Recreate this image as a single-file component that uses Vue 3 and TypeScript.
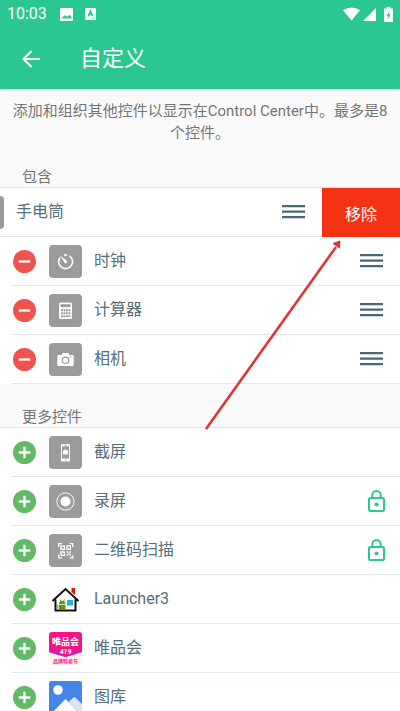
<script setup lang="ts">
import { ref } from 'vue'

type IconName =
  | 'torch' | 'timer' | 'calculator' | 'camera' | 'screenshot'
  | 'record' | 'qr' | 'launcher' | 'vip' | 'gallery'

interface Control {
  name: string
  icon: IconName
  locked?: boolean
}

const included = ref<Control[]>([
  { name: '手电筒', icon: 'torch' },
  { name: '时钟', icon: 'timer' },
  { name: '计算器', icon: 'calculator' },
  { name: '相机', icon: 'camera' },
])

const more = ref<Control[]>([
  { name: '截屏', icon: 'screenshot' },
  { name: '录屏', icon: 'record', locked: true },
  { name: '二维码扫描', icon: 'qr', locked: true },
  { name: 'Launcher3', icon: 'launcher' },
  { name: '唯品会', icon: 'vip' },
  { name: '图库', icon: 'gallery' },
])

// Name of the row that is swiped open to show its remove action
const swiped = ref<string | null>('手电筒')

function remove(item: Control) {
  included.value = included.value.filter((c) => c !== item)
  more.value.unshift(item)
  swiped.value = null
}

function add(item: Control) {
  if (item.locked || included.value.length >= 8) return
  more.value = more.value.filter((c) => c !== item)
  included.value.push(item)
}
</script>

<template>
  <div class="screen">
    <header class="top">
      <div class="status">
        <span class="time">10:03</span>
        <svg class="s-image" viewBox="0 0 13 13" aria-hidden="true">
          <path fill="#fff" fill-rule="evenodd" d="M1 0h11q1 0 1 1v11q0 1-1 1H1q-1 0-1-1V1q0-1 1-1zM2 10.500h9.300V8.500L9.300 6.700 7.400 8.800 5 7.200 2 9.500z" />
        </svg>
        <svg class="s-app" viewBox="0 0 11 12" aria-hidden="true">
          <rect width="11" height="12" rx="1" fill="#fff" />
          <path d="M3.200 8.300 5.400 2.800 7.600 8.300M4 6.600h2.900" fill="none" stroke="#2bc793" stroke-width="1.500" />
          <path d="M6.500 10.300h3.300" stroke="#2bc793" stroke-width=".6" />
        </svg>
        <span class="grow"></span>
        <svg class="s-wifi" viewBox="0 0 18 14" aria-hidden="true">
          <path d="M0 3Q9-3 18 3L9 14z" fill="#fff" />
        </svg>
        <svg class="s-cell" viewBox="0 0 13 13" aria-hidden="true">
          <path d="M13 0v13H0z" fill="#fff" />
        </svg>
        <svg class="s-battery" viewBox="0 0 9 15" aria-hidden="true">
          <path d="M2.500 0h4v1.500H9V15H0V1.500h2.500z" fill="#fff" />
          <path d="M5.500 4 2.500 8.800h1.800L3.500 12.500 6.800 7.500H5z" fill="#2bc793" />
        </svg>
      </div>
      <div class="bar">
        <button class="back" type="button" aria-label="返回">
          <svg viewBox="0 0 18 18" aria-hidden="true">
            <path d="M18 9H1.500M9.500 1 1.500 9l8 8" fill="none" stroke="#fff" stroke-width="2" />
          </svg>
        </button>
        <h1>自定义</h1>
      </div>
    </header>

    <main class="content">
      <p class="intro">添加和组织其他控件以显示在Control Center中。最多是8个控件。</p>

      <template v-for="section in [
        { id: 'in', title: '包含', items: included },
        { id: 'more', title: '更多控件', items: more },
      ]" :key="section.id">
        <h2>{{ section.title }}</h2>
        <ul class="list">
          <li
            v-for="item in section.items"
            :key="item.name"
            class="row"
            :class="{ swiped: section.id === 'in' && swiped === item.name }"
          >
            <div class="body">
              <button
                v-if="section.id === 'in'"
                class="toggle"
                type="button"
                :aria-label="'移除' + item.name"
                @click="swiped = item.name"
              >
                <svg viewBox="0 0 22 22" aria-hidden="true">
                  <circle cx="11" cy="11" r="11" fill="#ef5350" />
                  <path d="M5.500 11h11" stroke="#fff" stroke-width="2.200" />
                </svg>
              </button>
              <button v-else class="toggle" type="button" :aria-label="'添加' + item.name" @click="add(item)">
                <svg viewBox="0 0 22 22" aria-hidden="true">
                  <circle cx="11" cy="11" r="11" fill="#62b966" />
                  <path d="M5.500 11h11M11 5.500v11" stroke="#fff" stroke-width="2.200" />
                </svg>
              </button>

              <svg class="icon" viewBox="0 0 33 33" aria-hidden="true">
                <rect v-if="!['launcher', 'vip', 'gallery'].includes(item.icon)" width="33" height="33" rx="4" fill="#9b9b9b" />
                <g v-if="item.icon === 'torch'" fill="#fff">
                  <path d="M12 8h9v3l-2 3v11h-5V14l-2-3z" />
                </g>
                <g v-else-if="item.icon === 'timer'" fill="none" stroke="#fff" stroke-width="1.600">
                  <path d="M20.500 10.800a7 7 0 1 1-9.600 1.800" />
                  <path d="M10.800 10.500 17.900 15.800 16 18z" fill="#fff" stroke="none" />
                  <circle cx="16.500" cy="10" r="1.300" fill="#fff" stroke="none" />
                  <circle cx="16.700" cy="16.900" r="1.400" fill="#fff" stroke="none" />
                </g>
                <g v-else-if="item.icon === 'calculator'">
                  <rect x="10" y="8.500" width="13" height="16.500" rx="1.500" fill="#fff" />
                  <rect x="11.500" y="10.300" width="10" height="2.800" fill="#9b9b9b" />
                  <path d="M12 16.200h9.500M12 19.200h9.500M12 22.200h9.500" stroke="#9b9b9b" stroke-width="1.900" stroke-dasharray="1.900 .6" />
                </g>
                <g v-else-if="item.icon === 'camera'">
                  <path d="M9.500 12h3l1.200-2h5.600l1.200 2h3q1.200 0 1.200 1.200v8.600q0 1.200-1.200 1.200h-14q-1.200 0-1.200-1.200v-8.600q0-1.200 1.200-1.200z" fill="#fff" />
                  <circle cx="16.500" cy="17.300" r="3.200" fill="none" stroke="#9b9b9b" stroke-width="1.200" />
                  <path d="M20.500 14h2.200" stroke="#9b9b9b" />
                </g>
                <g v-else-if="item.icon === 'screenshot'">
                  <rect x="12" y="8" width="9" height="17.500" rx="1.300" fill="#fff" />
                  <rect x="13" y="10.300" width="7" height="12.200" fill="#9b9b9b" />
                  <path d="M14 14.500h1l.6-1h1.800l.6 1h1v4h-5z" fill="#fff" />
                  <path d="M15 9.200h3" stroke="#9b9b9b" stroke-width=".7" />
                  <circle cx="16.500" cy="24" r=".7" fill="#9b9b9b" />
                </g>
                <g v-else-if="item.icon === 'record'">
                  <circle cx="16.500" cy="16.500" r="8.600" fill="none" stroke="#fff" stroke-width="1" />
                  <circle cx="16.500" cy="16.500" r="5" fill="#fff" />
                </g>
                <g v-else-if="item.icon === 'qr'" fill="none" stroke="#fff" stroke-width="1.300">
                  <path d="M9.700 13V9.700H13M20.500 9.700h3.300V13M9.700 20.500v3.300H13M23.800 21.500v2.300h-3.300" />
                  <rect x="12" y="12" width="3.400" height="3.400" />
                  <rect x="18" y="12" width="3.400" height="3.400" />
                  <rect x="12" y="18" width="3.400" height="3.400" />
                  <path d="M17.500 18h1.500M20.500 18h1.500M19 19.500h1.500M17.500 21h1.500M20.500 21h1.500" />
                </g>
                <g v-else-if="item.icon === 'launcher'">
                  <path d="M22.500 5h3.500v7l-3.500-3z" fill="#e01010" />
                  <path d="M6 17 16.500 7 27 17v11H6z" fill="#fff" />
                  <path d="M3.500 18 16.500 6 29.500 18M6.500 16.500v11h20v-11" fill="none" stroke="#111" stroke-width="2" />
                  <path d="M10 27v-5h6.500v5zM10 21.200q0-3.400 3.200-3.400t3.300 3.400z" fill="#5f9312" />
                  <path d="M8.800 21.500v4M11 16.500l1 2M15.500 16.500l-1 2" stroke="#5f9312" stroke-width="1" />
                  <rect x="18" y="17" width="6" height="5.500" fill="#2aaeea" />
                </g>
                <g v-else-if="item.icon === 'vip'">
                  <rect width="33" height="33" rx="3" fill="#fff4ee" />
                  <path d="M3 0h27q3 0 3 3v17q-8 1-16.500 5Q8 21 0 20V3q0-3 3-3z" fill="#f71486" />
                  <path d="M0 16q5 3 11 3l5.500 6Q8 23 0 20zM33 16q-5 3-11 3l-5.500 6Q25 23 33 20z" fill="#d619b5" />
                  <text class="vip-name" x="16.500" y="13">唯品会</text>
                  <text class="vip-num" x="16.500" y="22">419</text>
                  <text class="vip-tag" x="16.500" y="30.500">品牌特卖节</text>
                </g>
                <g v-else>
                  <rect width="33" height="36" rx="2.500" fill="#4486e8" />
                  <circle cx="9" cy="9" r="4.800" fill="#fff" />
                  <path d="M2 33 16.500 18 31 33z" fill="#fff" />
                  <path d="M19.500 21 24 16.800q1.300-1.200 2.600 0L33 23v10h-2z" fill="#dfe3ea" />
                </g>
              </svg>

              <span class="name">{{ item.name }}</span>

              <button v-if="section.id === 'in'" class="handle" type="button" :aria-label="'拖动' + item.name">
                <svg viewBox="0 0 23 14" aria-hidden="true">
                  <path d="M0 1.200h23M0 6.700h23M0 12.200h23" stroke="#4b6777" stroke-width="2.300" />
                </svg>
              </button>
              <svg v-else-if="item.locked" class="lock" viewBox="0 0 17 22" role="img" aria-label="已锁定">
                <rect x="1" y="8" width="15" height="13" rx="1.200" fill="none" stroke="#2bc793" stroke-width="2" />
                <path d="M4.300 8V5.200a4.200 4.200 0 0 1 8.400 0V8" fill="none" stroke="#2bc793" stroke-width="2" />
                <circle cx="8.500" cy="14.500" r="2" fill="#2bc793" />
              </svg>
            </div>
            <button
              v-if="section.id === 'in' && swiped === item.name"
              class="remove"
              type="button"
              @click="remove(item)"
            >移除</button>
          </li>
        </ul>
      </template>

      <svg class="pointer" viewBox="0 0 138 192" aria-hidden="true">
        <path d="M2 190 132 8" stroke="#e03537" stroke-width="2.600" />
        <path d="M136 2 135.500 9 129 4.500z" fill="#e03537" stroke="#e03537" />
      </svg>
    </main>
  </div>
</template>

<style>
body {
  margin: 0;
  background: #fafafa;
}
</style>

<style scoped>
.screen {
  display: flex;
  flex-direction: column;
  height: 100vh;
  font-family: Roboto, "Noto Sans CJK SC", sans-serif;
  color: #546e7a;
}

button {
  padding: 0;
  border: 0;
  background: none;
  font: inherit;
  color: inherit;
  cursor: pointer;
}

svg {
  display: block;
}

.top {
  flex: none;
  background: #2bc793;
  color: #fff;
  box-shadow: 0 1px 2px rgba(0, 0, 0, 0.18);
  z-index: 1;
}

.status {
  display: flex;
  align-items: center;
  height: 28px;
  padding: 0 7px;
}

.time {
  font-size: 16px;
  line-height: 28px;
}

.s-image {
  width: 13px;
  height: 13px;
  margin-left: 13px;
}

.s-app {
  width: 11px;
  height: 12px;
  margin-left: 12px;
}

.grow {
  flex: 1;
}

.s-wifi {
  width: 17px;
  height: 14px;
}

.s-cell {
  width: 13px;
  height: 13px;
  margin-left: 3px;
}

.s-battery {
  width: 9px;
  height: 15px;
  margin-left: 8px;
}

.bar {
  display: flex;
  align-items: center;
  height: 61px;
  padding-left: 22px;
}

.back svg {
  width: 18px;
  height: 18px;
}

h1 {
  margin: 0 0 0 40px;
  font-size: 22px;
  font-weight: 400;
  line-height: 32px;
}

.content {
  position: relative;
  flex: 1;
  overflow-x: hidden;
  overflow-y: auto;
  scrollbar-width: none;
}

.intro {
  margin: 0;
  padding: 11px 8px 0;
  font-size: 15px;
  line-height: 22px;
  text-align: center;
  color: #757575;
}

h2 {
  margin: 0;
  padding: 24px 22px 0;
  font-size: 15px;
  font-weight: 400;
  line-height: 19px;
  color: #757575;
}

.list {
  margin: 0;
  padding: 0;
  list-style: none;
  background: #fff;
  border-top: 1px solid #dfe8ea;
}

.row {
  display: flex;
  height: 49px;
  overflow: hidden;
}

.body {
  display: flex;
  flex: none;
  align-items: center;
  box-sizing: border-box;
  width: 100%;
  padding: 0 15px 1px 13px;
  background: linear-gradient(#dfe8ea, #dfe8ea) 11px 100% / 100% 1px no-repeat;
}

.swiped .body {
  margin-left: -78px;
}

.toggle svg {
  width: 23px;
  height: 23px;
}

.icon {
  flex: none;
  width: 33px;
  height: 33px;
  margin-left: 13px;
}

.name {
  flex: 1;
  margin-left: 12px;
  font-size: 16px;
  line-height: 24px;
}

.handle {
  padding-right: 2px;
}

.handle svg {
  width: 23px;
  height: 14px;
}

.lock {
  width: 17px;
  height: 22px;
}

.remove {
  flex: none;
  width: 78px;
  background: #f53314;
  color: #fff;
  font-size: 16px;
}

.vip-name,
.vip-num,
.vip-tag {
  text-anchor: middle;
  font-weight: 700;
  fill: #fff;
}

.vip-name {
  font-size: 9px;
}

.vip-num {
  font-size: 7px;
  font-style: italic;
}

.vip-tag {
  font-size: 5px;
  fill: #f0148c;
}

.pointer {
  position: absolute;
  top: 150px;
  left: 204px;
  width: 138px;
  height: 192px;
  pointer-events: none;
}
</style>
